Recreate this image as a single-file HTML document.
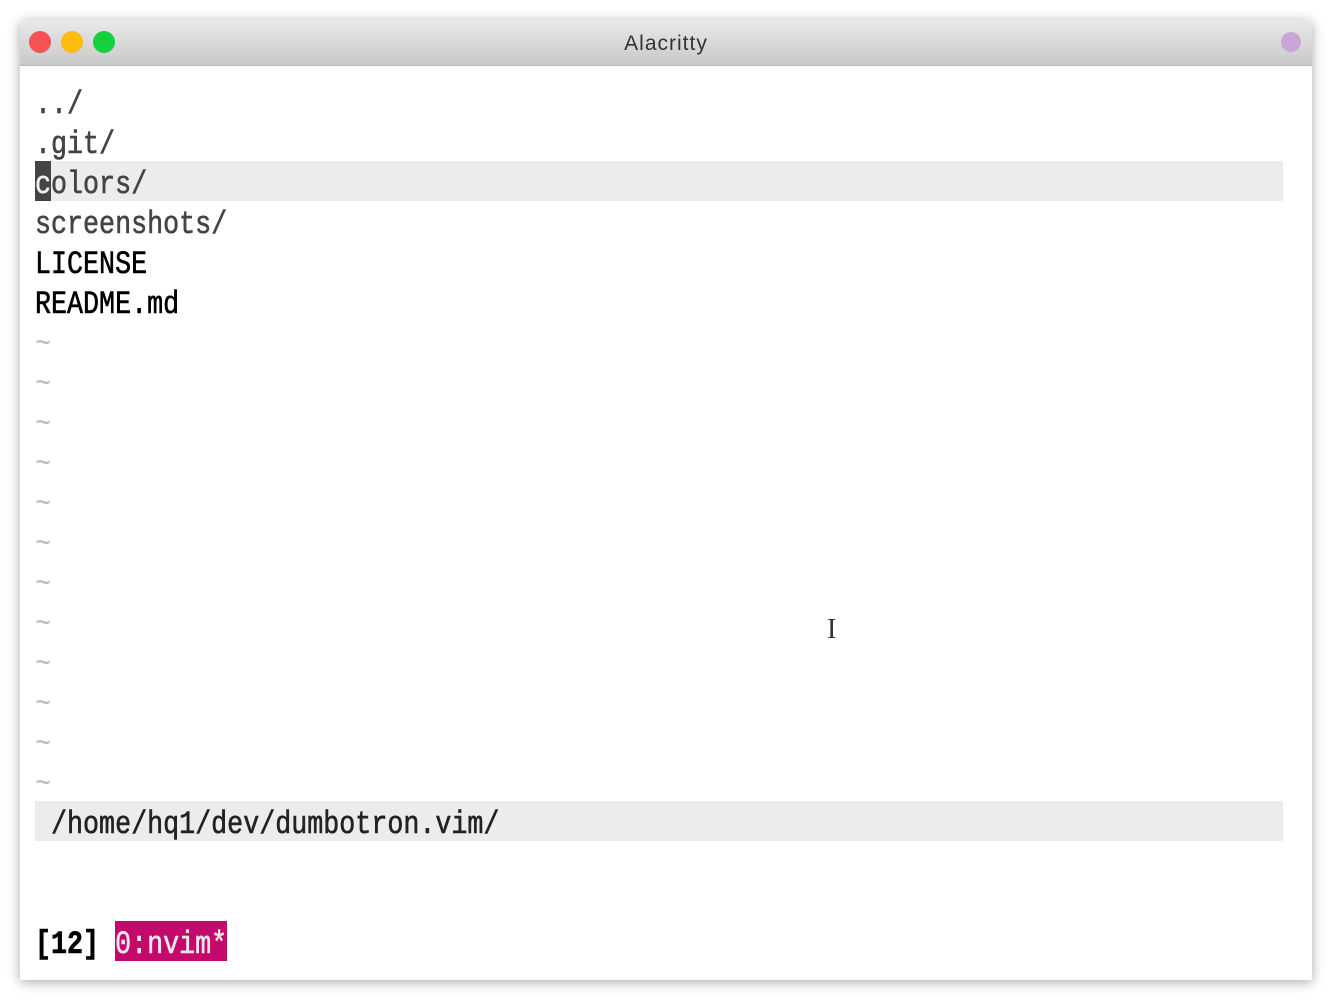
<!DOCTYPE html>
<html><head><style>
html,body{margin:0;padding:0;background:#fff;width:1332px;height:1000px;overflow:hidden}
.win{position:absolute;left:20px;top:20px;width:1292px;height:960px;background:#fff;box-shadow:0 2px 12px rgba(0,0,0,.35);border-radius:5px 5px 0 0;overflow:hidden}
.tb{position:absolute;left:0;top:0;width:100%;height:46px;background:linear-gradient(#e9e9e9,#c9c9c9);border-bottom:1px solid #b5b5b5;box-sizing:border-box}
.dot{position:absolute;top:11px;width:22px;height:22px;border-radius:50%}
.title{position:absolute;left:0;right:0;top:12px;text-align:center;font:21px "Liberation Sans",sans-serif;color:#333;letter-spacing:1px}
.row{position:absolute;left:15px;height:40px;line-height:40px;font:32px "Liberation Mono",monospace;white-space:pre;color:#444;-webkit-text-stroke:0.6px currentColor}
.row .s{display:inline-block;transform:scaleX(.834);transform-origin:0 0;position:relative;top:5px}
.hl{background:#ececec;width:1248px}
.t{color:#bbb;-webkit-text-stroke:0}
.f{color:#000}
</style></head><body>
<div class="win">
<div class="tb">
<div class="dot" style="left:9px;background:#f65255"></div>
<div class="dot" style="left:41px;background:#fdbc10"></div>
<div class="dot" style="left:73px;background:#13d13c"></div>
<div class="dot" style="left:1261px;width:20px;height:20px;top:12px;background:#c9a6d6"></div>
<div class="title">Alacritty</div>
</div>
<div class="row" style="top:61px"><span class="s">../</span></div>
<div class="row" style="top:101px"><span class="s">.git/</span></div>
<div class="row hl" style="top:141px"><div style="position:absolute;left:0;top:0;width:16px;height:40px;background:#444"></div><span class="s"><span style="color:#eee">c</span>olors/</span></div>
<div class="row" style="top:181px"><span class="s">screenshots/</span></div>
<div class="row f" style="top:221px"><span class="s">LICENSE</span></div>
<div class="row f" style="top:261px"><span class="s">README.md</span></div>
<div class="row t" style="top:301px"><span class="s">~</span></div>
<div class="row t" style="top:341px"><span class="s">~</span></div>
<div class="row t" style="top:381px"><span class="s">~</span></div>
<div class="row t" style="top:421px"><span class="s">~</span></div>
<div class="row t" style="top:461px"><span class="s">~</span></div>
<div class="row t" style="top:501px"><span class="s">~</span></div>
<div class="row t" style="top:541px"><span class="s">~</span></div>
<div class="row t" style="top:581px"><span class="s">~</span></div>
<div class="row t" style="top:621px"><span class="s">~</span></div>
<div class="row t" style="top:661px"><span class="s">~</span></div>
<div class="row t" style="top:701px"><span class="s">~</span></div>
<div class="row t" style="top:741px"><span class="s">~</span></div>
<div class="row hl" style="top:781px;color:#222"><span class="s"> /home/hq1/dev/dumbotron.vim/</span></div>
<div style="position:absolute;left:95px;top:901px;width:112px;height:40px;background:#c4086c"></div>
<div class="row f" style="top:901px;font-weight:bold"><span class="s">[12] <span style="color:#e8e8e8;font-weight:normal">0:nvim*</span></span></div>
<div style="position:absolute;left:807px;top:594px;font:28px 'Liberation Serif',serif;color:#333">I</div>
</div>
</body></html>
